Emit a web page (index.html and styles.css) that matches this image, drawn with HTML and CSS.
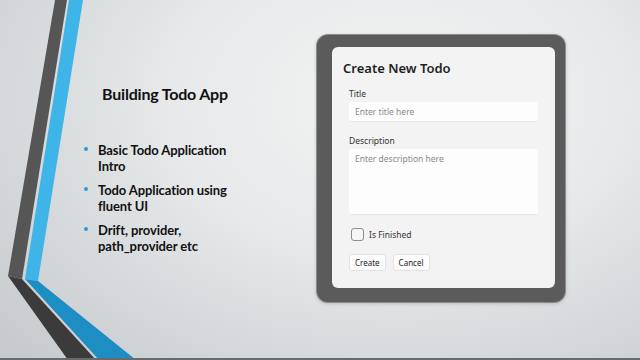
FILE: index.html
```html
<!DOCTYPE html>
<html lang="en">
  <head>
    <meta charset="utf-8">
    <title>Building Todo App</title>
    <link rel="stylesheet" href="styles.css">
  </head>
  <body>
    <section class="slide">
      <svg class="stripes" width="140" height="360" viewBox="0 0 140 360">
        <polygon points="55,0 67,0 22,279 8,276" fill="#565656"/>
        <polygon points="8,276 22,279 96,360 68,360" fill="#3b3b3b"/>
        <polygon points="69,0 83,0 38,281 25,279" fill="#3fb4e8"/>
        <polygon points="25,279 38,281 136,360 99,360" fill="#1c8ec3"/>
      </svg>

      <div class="intro">
        <h1>Building Todo App</h1>
        <ul>
          <li>Basic Todo Application Intro</li>
          <li>Todo Application using fluent UI</li>
          <li>Drift, provider, path_provider etc</li>
        </ul>
      </div>

      <div class="frame">
        <form class="dialog">
          <h2>Create New Todo</h2>
          <label class="field">
            <span>Title</span>
            <input type="text" placeholder="Enter title here">
          </label>
          <label class="field">
            <span>Description</span>
            <textarea placeholder="Enter description here"></textarea>
          </label>
          <label class="check">
            <input type="checkbox">
            <span>Is Finished</span>
          </label>
          <div class="actions">
            <button type="button">Create</button>
            <button type="button">Cancel</button>
          </div>
        </form>
      </div>
    </section>
  </body>
</html>
```

FILE: styles.css
```css
* {
  box-sizing: border-box;
  margin: 0;
  padding: 0;
}

body {
  width: 640px;
  height: 360px;
  overflow: hidden;
  background: #6a6a6a;
}

.slide {
  position: relative;
  display: flex;
  align-items: flex-start;
  width: 640px;
  height: 358px;
  background: radial-gradient(ellipse 520px 360px at 62% 28%, #f4f5f5 0%, #e6e8e9 45%, #c6cbce 100%);
  overflow: hidden;
}

.stripes {
  position: absolute;
  left: 0;
  top: 0;
}

/* slide text */

.intro {
  position: relative;
  width: 231px;
  margin: 84px 0 0 86px;
  font-family: Lato, "Open Sans", sans-serif;
  font-weight: 700;
  color: #111;
}

.intro h1 {
  font-size: 16px;
  font-weight: 700;
  margin-left: 16px;
  letter-spacing: -0.2px;
}

.intro ul {
  list-style: none;
  margin-top: 39px;
}

.intro li {
  position: relative;
  width: 150px;
  padding-left: 12px;
  font-size: 13px;
  line-height: 16px;
  margin-bottom: 8px;
  letter-spacing: -0.1px;
}

.intro li:before {
  content: '';
  position: absolute;
  left: -2px;
  top: 5px;
  width: 4px;
  height: 4px;
  border-radius: 50%;
  background: #2d9bd2;
}

/* dialog */

.frame {
  margin-top: 35px;
  width: 248px;
  height: 267px;
  padding: 12px 10px 14px 15px;
  background: #5b5b5b;
  border-radius: 11px;
  box-shadow: 0 0 0 1px #8c8c8c, 0 1px 4px rgba(0, 0, 0, 0.25);
}

.dialog {
  height: 100%;
  padding: 12px 17px 0 17px;
  background: #f3f3f3;
  border-radius: 6px;
  font-family: "Noto Sans", "Open Sans", sans-serif;
  color: #222;
}

.dialog h2 {
  font-size: 13px;
  font-weight: 600;
  line-height: 18px;
  margin-left: -6px;
  margin-bottom: 10px;
  color: #1f1f1f;
}

.field {
  display: block;
  margin-bottom: 12px;
}

.field span {
  display: block;
  font-size: 8.5px;
  line-height: 13px;
  margin-bottom: 2px;
  color: #333;
}

.field input,
.field textarea {
  display: block;
  width: 100%;
  border: 0;
  border-bottom: 1px solid #e6e6e6;
  border-radius: 2px;
  background: #fdfdfd;
  padding: 4px 6px;
  font-family: inherit;
  font-size: 8.5px;
  color: #333;
  resize: none;
  outline: none;
}

.field input {
  height: 20px;
}

.field textarea {
  height: 66px;
}

.field input::placeholder,
.field textarea::placeholder {
  color: #8a8a8a;
}

.check {
  display: flex;
  align-items: center;
  gap: 5px;
  margin-top: 13px;
  margin-left: 2px;
  font-size: 8.5px;
  color: #333;
}

.check input {
  appearance: none;
  width: 13px;
  height: 13px;
  border: 1px solid #8d8d8d;
  border-radius: 3px;
  background: #f6f6f6;
}

.actions {
  display: flex;
  gap: 7px;
  margin-top: 13px;
}

.actions button {
  height: 17px;
  padding: 0 5px;
  border: 1px solid #e2e2e2;
  border-radius: 3px;
  background: #fdfdfd;
  font-family: inherit;
  font-size: 8px;
  color: #222;
}
```
